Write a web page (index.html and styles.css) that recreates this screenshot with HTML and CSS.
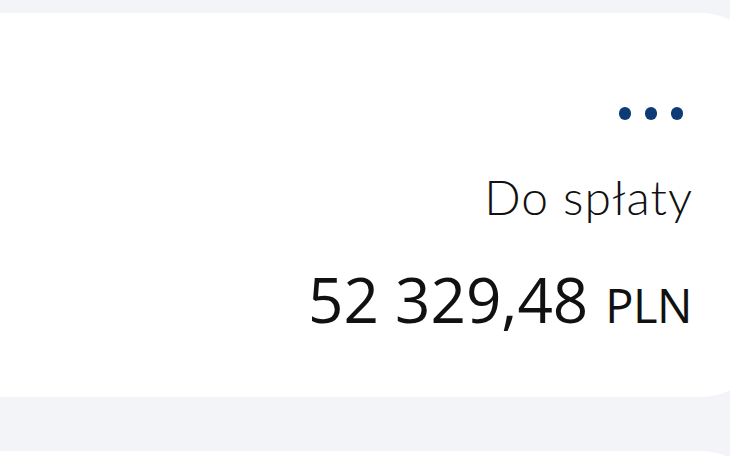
FILE: index.html
```html
<!DOCTYPE html>
<html lang="pl">
<head>
<meta charset="utf-8">
<link rel="stylesheet" href="styles.css">
</head>
<body>
<div class="page">
  <section class="card">
    <div class="menu" aria-label="Więcej">
      <span class="dot"></span><span class="dot"></span><span class="dot"></span>
    </div>
    <div class="label">Do spłaty</div>
    <div class="amount"><span class="value">52 329,48</span><span class="currency">PLN</span></div>
  </section>
  <section class="card next"></section>
</div>
</body>
</html>
```
FILE: styles.css
```css
html, body {
  margin: 0;
  padding: 0;
  background: #f3f4f8;
  overflow: hidden;
}
.page {
  width: 730px;
  height: 456px;
  padding-top: 13px;
  box-sizing: border-box;
  overflow: hidden;
}
.card {
  background: #ffffff;
  width: 770px;
  margin-left: 0;
  height: 384px;
  border-radius: 0 70px 70px 0;
  box-sizing: border-box;
  padding: 94px 78px 0 0;
  display: flex;
  flex-direction: column;
  align-items: flex-end;
}
.card.next {
  margin-top: 54px;
  height: 200px;
  padding: 0;
}
.menu {
  display: flex;
  gap: 13.5px;
  height: 40px;
  margin-right: 9px;
}
.dot {
  width: 12.5px;
  height: 12.5px;
  border-radius: 50%;
  background: #0c3b76;
}
.label {
  font-family: Lato, sans-serif;
  font-weight: 300;
  font-size: 48px;
  letter-spacing: 1px;
  color: #111;
  line-height: 56px;
  margin-top: 22px;
  margin-right: -1px;
}
.amount {
  font-family: "Open Sans", sans-serif;
  color: #111;
  line-height: 80px;
  margin-top: 34px;
  white-space: nowrap;
}
.value {
  font-size: 62px;
}
.currency {
  font-size: 47px;
  letter-spacing: -0.5px;
  margin-left: 17px;
}
```
